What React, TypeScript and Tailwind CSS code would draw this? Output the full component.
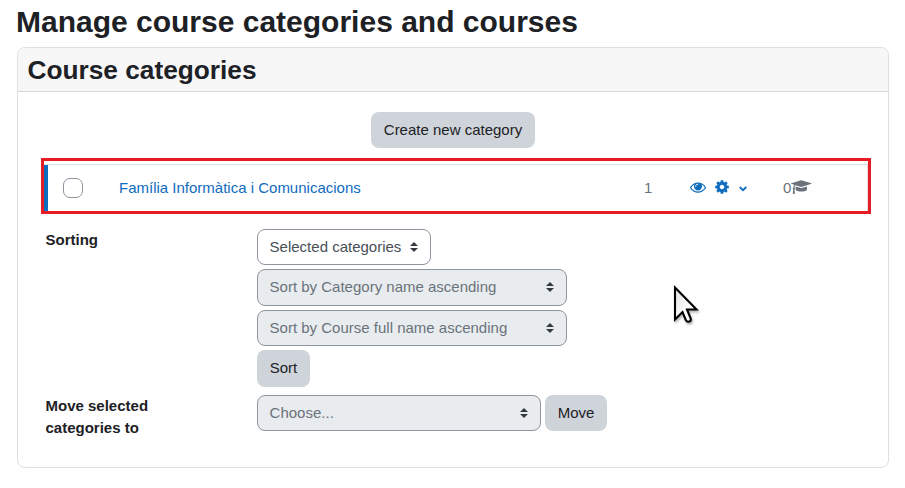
import type { ReactNode } from "react";

const EYE =
  "M1664 960q-152-236-381-353 61 104 61 225 0 185-131.5 316.5t-316.5 131.5-316.5-131.5-131.5-316.5q0-121 61-225-229 117-381 353 133 205 333.5 326.5t434.5 121.5 434.5-121.5 333.5-326.5zm-720-384q0-20-14-34t-34-14q-125 0-214.5 89.5t-89.5 214.5q0 20 14 34t34 14 34-14 14-34q0-86 61-147t147-61q20 0 34-14t14-34zm848 384q0 34-20 69-140 230-376.5 368.5t-499.5 138.5-499.5-139-376.5-368q-20-35-20-69t20-69q140-229 376.5-368t499.5-139 499.5 139 376.5 368q20 35 20 69z";
const COG =
  "M1152 896q0-106-75-181t-181-75-181 75-75 181 75 181 181 75 181-75 75-181zm512-109v222q0 12-8 23t-20 13l-185 28q-19 54-39 91 35 50 107 138 10 12 10 25t-9 23q-27 37-99 108t-94 71q-12 0-26-9l-138-108q-44 23-91 38-16 136-29 186-7 28-36 28h-222q-14 0-24.5-8.5t-11.5-21.5l-28-184q-49-16-90-37l-141 107q-10 9-25 9-14 0-25-11-126-114-165-168-7-10-7-23 0-12 8-23 15-21 51-66.5t54-70.5q-27-50-41-99l-183-27q-13-2-21-12.5t-8-23.5v-222q0-12 8-23t19-13l186-28q14-46 39-92-40-57-107-138-10-12-10-24 0-10 9-23 26-36 98.5-107.5t94.5-71.5q13 0 26 10l138 107q44-23 91-38 16-136 29-186 7-28 36-28h222q14 0 24.5 8.5t11.5 21.5l28 184q49 16 90 37l142-107q9-9 24-9 13 0 25 10 129 119 165 170 7 8 7 22 0 12-8 23-15 21-51 66.5t-54 70.5q26 50 41 98l183 28q13 2 21 12.5t8 23.5z";
const CAP =
  "M1774 836l18 316q4 69-82 128t-235 93.5-323 34.5-323-34.5-235-93.5-82-128l18-316 574 181q22 7 48 7t48-7zm530-324q0 23-22 31l-1120 352q-4 1-10 1t-10-1l-652-206q-43 34-71 111.5t-34 178.5q63 36 63 109 0 69-58 107l58 433q2 14-8 25-9 11-24 11h-192q-15 0-24-11-10-11-8-25l58-433q-58-38-58-107 0-73 65-111 11-207 98-330l-333-104q-22-8-22-31t22-31l1120-352q4-1 10-1t10 1l1120 352q22 8 22 31z";

function Select({ label, className, muted = true }: { label: string; className: string; muted?: boolean }) {
  return (
    <button
      type="button"
      className={`flex items-center justify-between rounded-lg border border-[#8f959e] pr-3 pl-[11.6px] text-left ${
        muted ? "bg-[#e9ecef] text-[#6a737b]" : "bg-white text-[#495057]"
      } ${className}`}
    >
      <span>{label}</span>
      <svg viewBox="0 0 4 5" className="h-[10px] w-2 shrink-0" fill="#343a40">
        <path d="M2 0L0 2h4zm0 5L0 3h4z" />
      </svg>
    </button>
  );
}

function Button({ children, className }: { children: ReactNode; className: string }) {
  return (
    <button type="button" className={`flex items-center justify-center rounded-lg bg-[#ced4da] text-[#1d2125] ${className}`}>
      {children}
    </button>
  );
}

export default function App() {
  return (
    <div className="relative h-[488px] w-[905px] overflow-hidden bg-white pl-4 font-['Liberation_Sans',Arial,sans-serif] text-[15px] leading-[22px] text-[#1d2125]">
      <h1 className="h-[47px] pt-1 text-[30px] leading-9 font-bold">Manage course categories and courses</h1>

      <section className="ml-px h-[421px] w-[872px] overflow-hidden rounded-lg border border-[#dfdfdf]">
        <header className="h-11 border-b border-[#d8d8d8] bg-[#f7f7f7] pt-1.5 pl-[9.5px]">
          <h2 className="text-[26.25px] leading-8 font-bold">Course categories</h2>
        </header>

        <div className="flex justify-center pt-5">
          <Button className="h-9 w-[164px]">Create new category</Button>
        </div>

        <div className="mt-2.5 ml-[23px] h-14 w-[830px] border-3 border-[#e71d25] pt-[3px]">
          <div className="flex h-[47px] items-center border-t border-r border-t-[#dee2e6] border-r-[#dee2e6]">
            <div className="h-[46px] w-1 bg-[#0f6cbf]" />
            <input type="checkbox" className="ml-[15px] size-5 appearance-none rounded-[7px] border border-[#8f959e] bg-white" />
            <a className="ml-9 w-[525px] text-[#0f6cbf]">Família Informàtica i Comunicacions</a>
            <span className="w-[46px] text-[#6a737b]">1</span>
            <span className="flex items-center pb-[1.5px] text-[#0f6cbf]">
              <svg viewBox="0 0 1792 1792" className="size-4" fill="currentColor"><path d={EYE} /></svg>
              <svg viewBox="0 0 1792 1792" className="ml-2 size-4" fill="currentColor"><path d={COG} /></svg>
              <svg viewBox="0 0 8 6" className="mt-[3px] ml-[9px] h-1.5 w-2" fill="none" stroke="currentColor" strokeWidth="1.8">
                <path d="M.7 1L4 4.2 7.3 1" />
              </svg>
            </span>
            <span className="ml-9 text-[#6a737b]">0</span>
            <svg viewBox="0 0 2304 1792" className="mb-[2px] h-4 w-[20.6px] text-[#6a737b]" fill="currentColor"><path d={CAP} /></svg>
          </div>
        </div>

        <div className="mt-[15px] flex pl-[27.5px]">
          <div className="w-[211.5px] font-bold">Sorting</div>
          <div className="flex flex-col gap-1">
            <Select label="Selected categories" muted={false} className="h-9 w-[174px]" />
            <Select label="Sort by Category name ascending" className="h-[37px] w-[310px] pb-px" />
            <Select label="Sort by Course full name ascending" className="h-9 w-[310px]" />
            <Button className="h-[37px] w-[53px] pb-px">Sort</Button>
          </div>
        </div>

        <div className="mt-2 flex pl-[27.5px]">
          <div className="w-[211.5px] font-bold">Move selected<br />categories to</div>
          <div className="flex gap-1">
            <Select label="Choose..." className="h-9 w-[284px]" />
            <Button className="h-9 w-[62px]">Move</Button>
          </div>
        </div>
      </section>

      <svg viewBox="0 0 28 42" className="absolute top-[284px] left-[672px] h-[42px] w-7 drop-shadow-[1px_2px_1px_rgba(0,0,0,0.3)]">
        <defs>
          <linearGradient id="pointer" x1="0" y1="0" x2="1" y2="1">
            <stop offset="0.2" stopColor="#e8e8e8" />
            <stop offset="0.6" stopColor="#fff" />
          </linearGradient>
        </defs>
        <path
          d="M3 3.5V35.5L10.5 28L13.8 36Q15 38.3 17.2 37.6T18.7 34.5L15 25.5H24.5Z"
          fill="url(#pointer)"
          stroke="#000"
          strokeWidth="2.1"
        />
      </svg>
    </div>
  );
}
